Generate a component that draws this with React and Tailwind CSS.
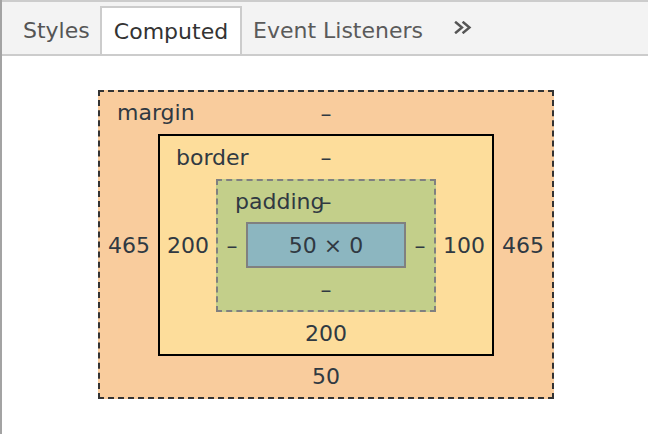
import React from "react";

const dash = "–";

const App = () => {
  return (
    <div className="w-[648px] h-[434px] overflow-hidden bg-white border-l-2 border-[#a3a3a3] font-['DejaVu_Sans',sans-serif] text-[22px]">
      {/* Tab bar */}
      <div className="h-[56px] bg-[#f3f3f3] border-t-2 border-b-2 border-[#cccccc] flex items-end">
        <div className="w-[98px] h-[48px] flex items-center pl-[21px] text-[#555555]">Styles</div>
        <div className="w-[142px] h-[48px] flex items-center justify-center bg-white border-2 border-b-0 border-[#cccccc] text-[#333333]">
          Computed
        </div>
        <div className="w-[200px] h-[48px] flex items-center pl-[11px] text-[#5a5a5a]">Event Listeners</div>
        <div className="h-[48px] flex items-center ml-[11px] mb-[3px]">
          <svg width="19" height="13" viewBox="0 0 19 13" fill="none" stroke="#555555" strokeWidth="2.4" strokeLinecap="square">
            <path d="M3 1.5 L9 6.5 L3 11.5 M10.5 1.5 L16.5 6.5 L10.5 11.5" />
          </svg>
        </div>
      </div>

      {/* Box model */}
      <div className="pt-[34px] pl-[96px] text-[#303942]">
        {/* margin */}
        <div className="relative w-[456px] h-[309px] border-2 border-dashed border-[#333333] bg-[#f9cc9d] flex flex-col">
          <span className="absolute left-[17px] top-0 leading-[42px]">margin</span>
          <div className="h-[42px] flex items-center justify-center">{dash}</div>
          <div className="flex items-center">
            <div className="w-[58px] text-center">465</div>

            {/* border */}
            <div className="relative w-[336px] h-[222px] border-2 border-black bg-[#fddd9b] flex flex-col">
              <span className="absolute left-[16px] top-0 leading-[43px]">border</span>
              <div className="h-[43px] flex items-center justify-center">{dash}</div>
              <div className="flex items-center">
                <div className="w-[56px] text-center">200</div>

                {/* padding */}
                <div className="relative w-[220px] h-[133px] border-2 border-dashed border-[#808080] bg-[#c3cf8a] flex flex-col">
                  <span className="absolute left-[17px] top-0 leading-[41px]">padding</span>
                  <div className="h-[41px] flex items-center justify-center">{dash}</div>
                  <div className="flex items-center">
                    <div className="w-[28px] text-center">{dash}</div>
                    <div className="w-[160px] h-[46px] border-2 border-[#808080] bg-[#8cb6c0] flex items-center justify-center">
                      50 × 0
                    </div>
                    <div className="w-[28px] text-center">{dash}</div>
                  </div>
                  <div className="h-[42px] flex items-center justify-center">{dash}</div>
                </div>

                <div className="w-[56px] text-center">100</div>
              </div>
              <div className="h-[42px] flex items-center justify-center">200</div>
            </div>

            <div className="w-[58px] text-center">465</div>
          </div>
          <div className="h-[41px] flex items-center justify-center">50</div>
        </div>
      </div>
    </div>
  );
};

export default App;
